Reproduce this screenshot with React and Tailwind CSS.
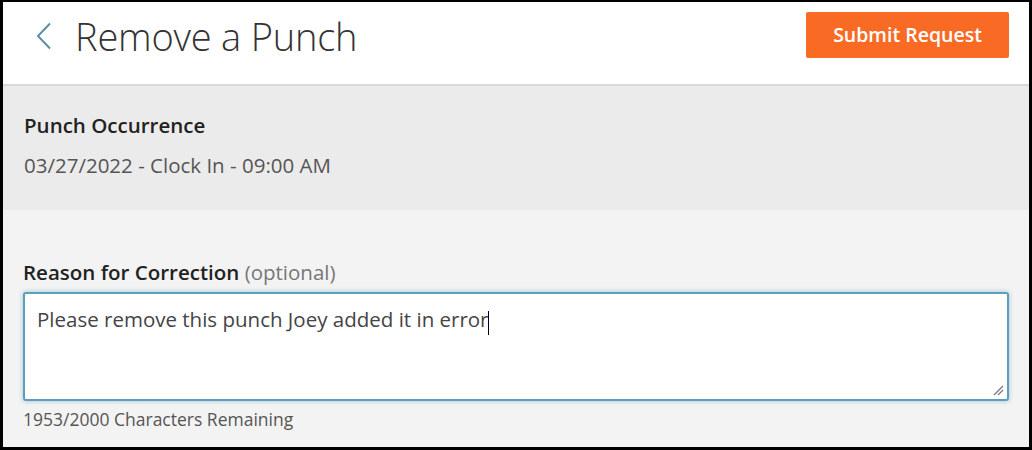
import React from 'react';

function BackChevron() {
  return (
    <svg width="18" height="28" viewBox="0 0 18 28" fill="none" className="shrink-0">
      <polyline points="15,1.5 3,14 15,26.5" stroke="#5d8ea6" strokeWidth="2" strokeLinejoin="miter" />
    </svg>
  );
}

function ResizeGrip() {
  return (
    <svg width="12" height="12" viewBox="0 0 12 12" className="absolute right-[3px] bottom-[3px]">
      <line x1="11" y1="2" x2="2" y2="11" stroke="#777" strokeWidth="1.2" />
      <line x1="11" y1="6" x2="6" y2="11" stroke="#777" strokeWidth="1.2" />
    </svg>
  );
}

export default function App() {
  return (
    <div className="w-[1032px] h-[450px] overflow-hidden border-t-2 border-l-[3px] border-r-[3px] border-b-[3px] border-black bg-white font-['Open_Sans',sans-serif] flex flex-col">
      {/* header */}
      <header className="h-[84px] shrink-0 flex items-center justify-between pl-[32px] pr-[20px] border-b-2 border-[#d8d8d8]">
        <div className="flex items-center gap-[22px] -mt-[14px]">
          <BackChevron />
          <h1 className="text-[38px] font-light text-[#333] leading-none tracking-[-0.2px]">Remove a Punch</h1>
        </div>
        <button className="w-[203px] h-[46px] -mt-[16px] rounded-[2px] bg-[#f96b24] text-white text-[19.5px] font-semibold">
          Submit Request
        </button>
      </header>

      {/* punch info */}
      <section className="h-[124px] shrink-0 bg-[#ebebeb] pl-[21px] pt-[25px]">
        <div className="text-[20.5px] leading-[28px] font-semibold text-[#222]">Punch Occurrence</div>
        <div className="mt-3 text-[20.5px] leading-[28px] text-[#555]">03/27/2022 - Clock In - 09:00 AM</div>
      </section>

      {/* reason */}
      <section className="flex-1 bg-[#f3f3f3] pl-[20px] pr-[20px] pt-[48px]">
        <div className="text-[20.5px] leading-[28px] text-[#222]">
          <span className="font-semibold">Reason for Correction</span>{' '}
          <span className="text-[#777]">(optional)</span>
        </div>
        <div className="relative mt-[6px] h-[109px] rounded-[3px] border-2 border-[#5b9fba] bg-white shadow-[0_0_5px_rgba(91,159,186,0.55)] pl-3 pt-[11px]">
          <span className="text-[20.5px] leading-[28px] text-[#444]">Please remove this punch Joey added it in error</span>
          <span className="inline-block align-middle w-px h-[24px] bg-black -ml-[1px]"></span>
          <ResizeGrip />
        </div>
        <div className="mt-[6px] text-[17.5px] leading-6 text-[#555]">1953/2000 Characters Remaining</div>
      </section>
    </div>
  );
}
